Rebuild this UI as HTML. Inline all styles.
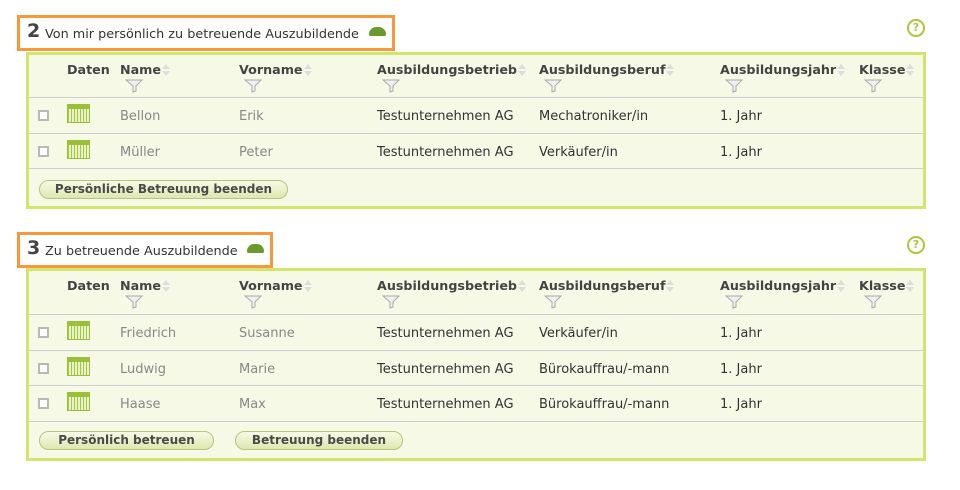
<!DOCTYPE html>
<html><head><meta charset="utf-8"><style>
*{margin:0;padding:0;box-sizing:border-box}
body{width:960px;height:490px;background:#fff;font-family:"DejaVu Sans",Verdana,sans-serif;font-size:13px;color:#333;position:relative;overflow:hidden}
.a{position:absolute;white-space:nowrap}
.title{position:absolute;border:3px solid #f7983a;background:#fff}
.title b{position:absolute;left:7px;top:2px;font-size:19px;color:#444}
.title span{position:absolute;left:25px;top:9px;font-size:12.8px;color:#333}
.tri{position:absolute;top:9px;width:17px;height:9px;background:#6a9a2a;border-radius:8px 8px 2px 2px}
.tbl{position:absolute;left:26px;width:900px;border:3px solid #d2e66e;background:#f6f9e6}
.h{font-weight:bold;font-size:12.7px;color:#444}
.sep{position:absolute;left:0;right:0;height:1px;background:#cfcfcf}
.gray{color:#888}
.cb{position:absolute;width:11px;height:11px;border:2px solid #b8b8b8;background:#fff}
.cal{position:absolute;width:23px;height:19px;border:1px solid #9cbf3a;background:repeating-linear-gradient(90deg,#a4c83c 0 1px,#e9f2c8 1px 3px);}
.cal:before{content:"";position:absolute;left:0;right:0;top:0;height:4px;background:#9cbf3a}
.btn{position:absolute;height:19px;border:1px solid #b6c47c;border-radius:10px;background:linear-gradient(#f7fae6,#dde8b0);font-weight:bold;font-size:12px;color:#4a4a4a;text-align:center;line-height:17px}
.q{position:absolute;left:907px;width:18px;height:18px;border:2px solid #a8c83a;border-radius:50%;color:#a8c83a;font-size:11px;font-weight:bold;text-align:center;line-height:14px}
.srt{display:inline-block;position:relative;width:9px;height:14px;vertical-align:middle;margin-left:1px}
.srt:before{content:"";position:absolute;top:0;left:0;border-left:4.5px solid transparent;border-right:4.5px solid transparent;border-bottom:5px solid #ddd}
.srt:after{content:"";position:absolute;top:7px;left:0;border-left:4.5px solid transparent;border-right:4.5px solid transparent;border-top:5px solid #ddd}
</style></head><body>

<div class="title" style="left:17px;top:15px;width:378px;height:36px"><b>2</b><span>Von mir persönlich zu betreuende Auszubildende</span><div class="tri" style="left:349px"></div></div>
<div class="q" style="top:19px">?</div>

<div class="tbl" style="top:52px;height:157px" id="t1"></div>

<div class="title" style="left:17px;top:232px;width:256px;height:36px"><b>3</b><span>Zu betreuende Auszubildende</span><div class="tri" style="left:227px"></div></div>
<div class="q" style="top:236px">?</div>

<div class="tbl" style="top:268px;height:193px" id="t2"></div>

<script>
function hdr(){
 var cols=[["Daten",38,0],["Name",91,1],["Vorname",210,1],["Ausbildungsbetrieb",348,1],["Ausbildungsberuf",510,1],["Ausbildungsjahr",691,1],["Klasse",830,1]];
 var h='';
 cols.forEach(function(c){
  h+='<div class="a h" style="left:'+c[1]+'px;top:7px">'+c[0]+(c[2]?'<span class="srt"></span>':'')+'</div>';
  if(c[2]){
   h+='<svg class="a" style="left:'+(c[1]+5)+'px;top:24px" width="18" height="14" viewBox="0 0 18 14"><path d="M1 1H17L11 7V12L8 13V7Z" fill="#f0f0f0" stroke="#aaa"/></svg>';
  }
 });
 return h;
}
function rows(data,top){
 var h='';
 data.forEach(function(r,i){
  var y=top+i*35.5;
  h+='<div class="sep" style="top:'+y+'px"></div>';
  h+='<div class="cb" style="left:9px;top:'+(y+13)+'px"></div>';
  h+='<div class="cal" style="left:38px;top:'+(y+7)+'px"></div>';
  h+='<div class="a gray" style="left:91px;top:'+(y+12)+'px">'+r[0]+'</div>';
  h+='<div class="a gray" style="left:210px;top:'+(y+12)+'px">'+r[1]+'</div>';
  h+='<div class="a" style="left:348px;top:'+(y+12)+'px">Testunternehmen AG</div>';
  h+='<div class="a" style="left:510px;top:'+(y+12)+'px">'+r[2]+'</div>';
  h+='<div class="a" style="left:691px;top:'+(y+12)+'px">1. Jahr</div>';
 });
 h+='<div class="sep" style="top:'+(top+data.length*35.5)+'px"></div>';
 return h;
}
document.getElementById('t1').innerHTML=hdr()+rows([["Bellon","Erik","Mechatroniker/in"],["Müller","Peter","Verkäufer/in"]],42)+
 '<div class="btn" style="left:10px;top:125px;width:249px">Persönliche Betreuung beenden</div>';
document.getElementById('t2').innerHTML=hdr()+rows([["Friedrich","Susanne","Verkäufer/in"],["Ludwig","Marie","Bürokauffrau/-mann"],["Haase","Max","Bürokauffrau/-mann"]],43)+
 '<div class="btn" style="left:10px;top:160px;width:175px">Persönlich betreuen</div><div class="btn" style="left:206px;top:160px;width:168px">Betreuung beenden</div>';
</script>
</body></html>
